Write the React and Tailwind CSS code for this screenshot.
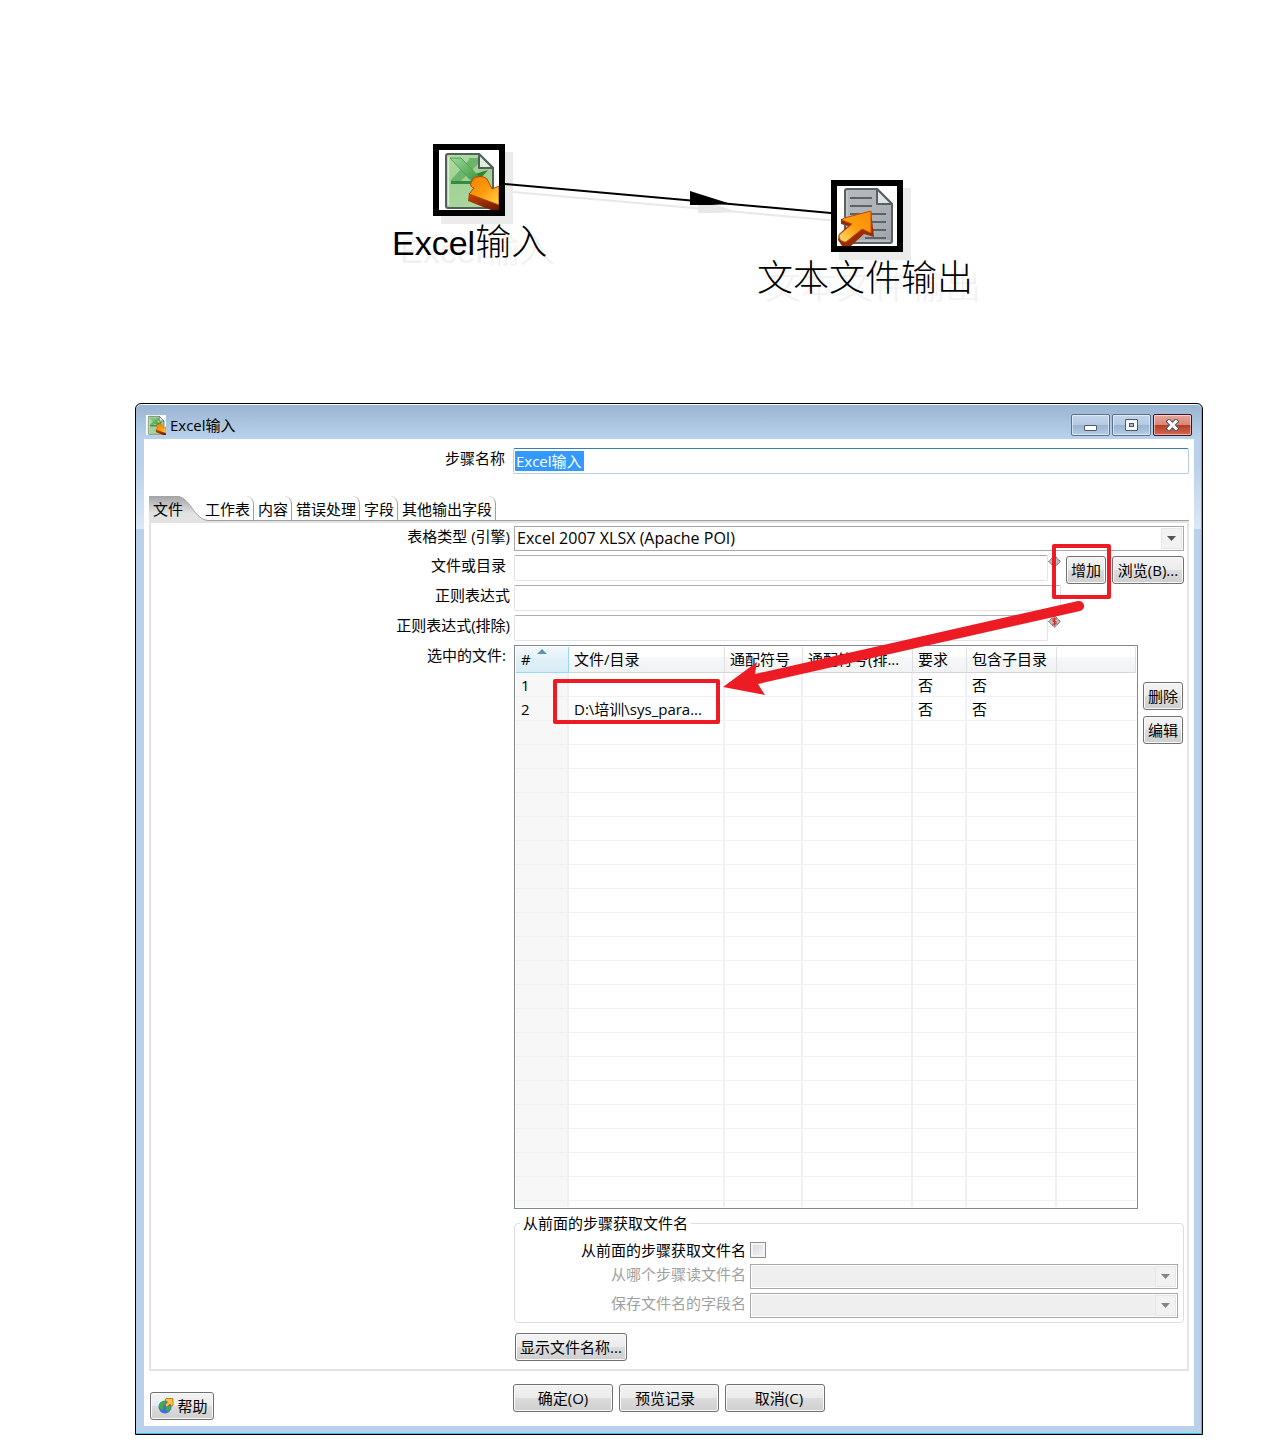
import React from "react";

const columns = ["#", "文件/目录", "通配符号", "通配符号(排...", "要求", "包含子目录", ""];

const files = [
  ["1", "", "", "", "否", "否", ""],
  ["2", "D:\\培训\\sys_para...", "", "", "否", "否", ""],
];

const rows = [...files, ...Array.from({ length: 20 }, () => ["", "", "", "", "", "", ""])];

function ExcelInputIcon({ className }) {
  return (
    <svg viewBox="0 0 60 60" className={className} aria-hidden="true">
      <defs>
        <linearGradient id="sheet" x1="0" y1="0" x2="0.3" y2="1">
          <stop offset="0" stopColor="#b5dca9" />
          <stop offset="0.5" stopColor="#9fd092" />
          <stop offset="1" stopColor="#aad69f" />
        </linearGradient>
        <linearGradient id="xbar" x1="0" y1="0" x2="1" y2="1">
          <stop offset="0" stopColor="#a3d99f" />
          <stop offset="0.5" stopColor="#5bb05d" />
          <stop offset="1" stopColor="#2c7a33" />
        </linearGradient>
        <linearGradient id="arrowIn" x1="0" y1="0" x2="1" y2="1">
          <stop offset="0" stopColor="#f57f00" />
          <stop offset="0.5" stopColor="#fd9a0c" />
          <stop offset="1" stopColor="#ffd84a" />
        </linearGradient>
        <linearGradient id="arrowInSide" x1="0" y1="0" x2="1" y2="1">
          <stop offset="0" stopColor="#c24a08" />
          <stop offset="1" stopColor="#6d1502" />
        </linearGradient>
      </defs>
      <path d="M9 4h31l14 14v38a2 2 0 0 1-2 2H9a2 2 0 0 1-2-2V6a2 2 0 0 1 2-2z" fill="url(#sheet)" stroke="#53605a" strokeWidth="2" />
      <path d="M9.500 7v48.500" stroke="#d4efcc" strokeWidth="1.500" />
      <path d="M30 8h9v6L22 31h16v3H12v-4L30 10z" fill="#6bb56b" />
      <path d="M12 31h26v3H12z" fill="#378a3d" />
      <path d="M36 24l13-4-7 8 6 6-8 0z" fill="#2f8438" />
      <path d="M11 8h11l25 26-9 3z" fill="url(#xbar)" stroke="#559e55" strokeWidth="1" />
      <path d="M40 4v14h14z" fill="#e1f0dc" stroke="#53605a" strokeWidth="2" strokeLinejoin="round" />
      <path d="M30 43l-1 8 23 9h8V46z" fill="url(#arrowInSide)" />
      <path d="M33 31c1-5 11-6 15-2l5 10 7-3v19l-30-11 5-6c-4-1-4-4-2-7z" fill="url(#arrowIn)" stroke="#b34206" strokeWidth="1" strokeLinejoin="round" />
    </svg>
  );
}

function TextOutputIcon({ className }) {
  return (
    <svg viewBox="0 0 60 60" className={className} aria-hidden="true">
      <defs>
        <linearGradient id="paper" x1="0" y1="0" x2="1" y2="1">
          <stop offset="0" stopColor="#b6babd" />
          <stop offset="0.5" stopColor="#aeb3b7" />
          <stop offset="1" stopColor="#9da3a8" />
        </linearGradient>
        <linearGradient id="arrowOut" x1="1" y1="0" x2="0" y2="1">
          <stop offset="0" stopColor="#f98a00" />
          <stop offset="0.55" stopColor="#fda012" />
          <stop offset="1" stopColor="#ffe27a" />
        </linearGradient>
      </defs>
      <path d="M10 3h30l15 15v37a2 2 0 0 1-2 2H10a2 2 0 0 1-2-2V5a2 2 0 0 1 2-2z" fill="url(#paper)" stroke="#5a6064" strokeWidth="2" />
      <path d="M10 5v50h43" fill="none" stroke="#cdd1d3" strokeWidth="1" />
      <path d="M13 12h22M13 20h22M13 28h36M30 36h19M30 44h19M28 52h21" stroke="#5d6266" strokeWidth="2" />
      <path d="M40 3v15h15z" fill="#e0e3e5" stroke="#5a6064" strokeWidth="2" strokeLinejoin="round" />
      <path d="M34 25l3 26-10-3-13 12H5l-4-6 1-6 9-8-7-2V33z" fill="#9a2c05" />
      <path d="M34 25v22l-9-4L9 56c-4 0-7-2-7-7l13-11-10-4 2-2z" fill="url(#arrowOut)" stroke="#c0500a" strokeWidth="1" strokeLinejoin="round" />
    </svg>
  );
}

function GlobeIcon() {
  return (
    <svg viewBox="0 0 16 16" className="h-4 w-4" aria-hidden="true">
      <circle cx="7" cy="9" r="6.500" fill="#3b6fe0" />
      <path d="M1 7c1-3 4-4.500 6.500-4L7 6 5 7l1 3-2 2-2.500-2z" fill="#3fae49" />
      <path d="M8 9l4-1 1 2-3 4-2-2z" fill="#3fae49" />
      <path d="M7 2l1-1.500h7v7l-2 .5-1-2-3 3-2-2 2.500-3z" fill="#fcc43c" stroke="#a86f10" strokeWidth="0.800" />
    </svg>
  );
}

function VariableIcon({ dollar }) {
  return (
    <svg viewBox="0 0 13 13" className="h-[13px] w-[13px] shrink-0" aria-hidden="true">
      <path d="M6.500 0.700L12.300 6.500 6.500 12.300 0.700 6.500z" fill="#bdbdbd" stroke="#4a4a4a" strokeWidth="1" strokeDasharray="1.500 0.500" />
      {dollar && <path d="M8.500 4H5v2.500h3V9H4.500M6.500 2.500v8" fill="none" stroke="#d81e1e" strokeWidth="1" />}
    </svg>
  );
}

function Button({ className = "", children, ...rest }) {
  return (
    <button
      type="button"
      className={
        "flex h-7 shrink-0 items-center justify-center whitespace-nowrap rounded-[3px] border border-[#707070] bg-[linear-gradient(#f3f3f3,#ebebeb_50%,#dcdcdc_50%,#cfcfcf)] shadow-[inset_0_0_0_1px_#fafafa] " +
        className
      }
      {...rest}
    >
      {children}
    </button>
  );
}

function TextField({ id, className = "" }) {
  return (
    <input
      id={id}
      type="text"
      className={
        "h-[26px] min-w-0 rounded-[2px] border border-[#e2e3ea] border-t-[#abadb3] bg-white px-1 outline-none " +
        className
      }
    />
  );
}

function Combo({ id, options, disabled, className = "" }) {
  return (
    <div className={"relative h-[25px] min-w-0 border border-[#a7a7ac] bg-white p-px " + className}>
      <select
        id={id}
        disabled={disabled}
        className="block h-full w-full appearance-none bg-white pb-px pl-px pr-6 text-base leading-5 text-black opacity-100 outline-none disabled:bg-[#efefef]"
      >
        {options.map((o) => (
          <option key={o}>{o}</option>
        ))}
      </select>
      <span className="pointer-events-none absolute inset-y-px right-px flex w-[21px] items-center justify-center border border-[#e6e6e6] bg-[#f2f2f2]">
        <svg viewBox="0 0 9 5" className="h-[5px] w-[9px]" aria-hidden="true">
          <path d="M0 0h9L4.500 5z" fill={disabled ? "#858585" : "#555"} />
        </svg>
      </span>
    </div>
  );
}

function FormRow({ id, label, inset, children }) {
  return (
    <div className="flex h-[26px] items-start">
      <label htmlFor={id} className={"w-[363px] shrink-0 text-right leading-5 " + (inset ? "pr-2" : "pr-1")}>
        {label}
      </label>
      {children}
    </div>
  );
}

function Tab({ children }) {
  return (
    <button
      type="button"
      role="tab"
      aria-selected="false"
      className="flex h-6 items-center whitespace-nowrap rounded-tr-[8px] border-r border-[#a0a0a0] pl-1 pr-[3px] pt-[2px]"
    >
      {children}
    </button>
  );
}

function Flow() {
  return (
    <section className="relative h-[403px] font-['Liberation_Sans','Noto_Sans_CJK_SC',sans-serif] text-4xl font-light">
      <div className="absolute left-[433px] top-[144px] h-[72px] w-[72px] border-[6px] border-black bg-white shadow-[8px_8px_0_#ebebeb]">
        <ExcelInputIcon className="h-full w-full" />
      </div>
      <p className="absolute left-[392px] top-[222px] whitespace-nowrap leading-[42px] [text-shadow:8px_8px_0_#f1f1f1]">
        <span className="text-[34px] font-normal">Excel</span>输入
      </p>
      <div className="absolute left-[831px] top-[180px] h-[72px] w-[72px] border-[6px] border-black bg-white shadow-[8px_8px_0_#ebebeb]">
        <TextOutputIcon className="h-full w-full" />
      </div>
      <p className="absolute left-[757px] top-[258px] whitespace-nowrap leading-[42px] [text-shadow:8px_8px_0_#f1f1f1]">
        文本文件输出
      </p>
      <svg className="absolute left-[505px] top-[170px] h-[60px] w-[326px]" viewBox="505 170 326 60" aria-hidden="true">
        <g fill="#e8e8e8" stroke="#e8e8e8">
          <path d="M513 192L839 221" strokeWidth="2" />
          <path d="M698 199v14h20l20-1z" stroke="none" />
        </g>
        <path d="M505 184L831 213" stroke="#000" strokeWidth="2" />
        <path d="M690 191v14h21l20-1z" fill="#000" />
      </svg>
    </section>
  );
}

function TitleBar() {
  const box =
    "flex h-[22px] w-[39px] items-center justify-center rounded-[2px] border shadow-[inset_0_0_0_1px_rgba(255,255,255,0.5)] ";
  return (
    <header className="flex h-[34px] items-center px-[10px] pt-2">
      <ExcelInputIcon className="h-5 w-5 bg-white" />
      <h1 className="flex-1 pl-1">Excel输入</h1>
      <div className="flex items-center gap-[2px] self-start pt-[2px]">
        <button type="button" aria-label="最小化" className={box + "border-[#5f6f8e] bg-[linear-gradient(#c3d5e9,#b4cbe3_50%,#98b3d0_50%,#b3cce6)]"}>
          <svg viewBox="0 0 13 13" className="h-[13px] w-[13px]" aria-hidden="true">
            <rect x="0.500" y="6.500" width="12" height="5" rx="0.500" fill="#fff" stroke="#535666" />
          </svg>
        </button>
        <button type="button" aria-label="最大化" className={box + "border-[#5f6f8e] bg-[linear-gradient(#c3d5e9,#b4cbe3_50%,#98b3d0_50%,#b3cce6)]"}>
          <svg viewBox="0 0 13 13" className="h-[13px] w-[13px]" aria-hidden="true">
            <rect x="0.500" y="0.500" width="12" height="11" rx="0.500" fill="#f7f7f7" stroke="#535666" />
            <rect x="4.500" y="4.500" width="4" height="3" fill="#9db8d8" stroke="#535666" />
          </svg>
        </button>
        <button type="button" aria-label="关闭" className={box + "border-[#43141b] bg-[linear-gradient(#e6a69a,#d98577_50%,#b93a22_50%,#cf6a52)]"}>
          <svg viewBox="0 0 13 12" className="h-3 w-[13px]" aria-hidden="true">
            <path d="M3 2.500L10 9.500M10 2.500L3 9.500" stroke="#535666" strokeWidth="5" strokeLinecap="square" />
            <path d="M3 2.500L10 9.500M10 2.500L3 9.500" stroke="#fff" strokeWidth="3" strokeLinecap="square" />
          </svg>
        </button>
      </div>
    </header>
  );
}

function FileTable() {
  return (
    <div className="min-w-0 flex-1 border border-[#828790] p-px">
      <table aria-labelledby="selected-files" className="w-full table-fixed border-separate border-spacing-0">
        <colgroup>
          <col className="w-[53px]" />
          <col className="w-[156px]" />
          <col className="w-[78px]" />
          <col className="w-[110px]" />
          <col className="w-[54px]" />
          <col className="w-[90px]" />
          <col />
        </colgroup>
        <thead>
          <tr className="h-[26px]">
            {columns.map((c, i) => (
              <th
                key={i}
                className={
                  "relative whitespace-nowrap border-b border-r p-0 pb-px pl-[5px] text-left font-normal leading-[22px] " +
                  (i === 0
                    ? "border-[#96d9f9] bg-[linear-gradient(#f2f9fc,#e1f1f9_50%,#d8ecf6)]"
                    : "border-b-[#d5d5d5] border-r-[#dedfe1] bg-[linear-gradient(#fff_40%,#f7f8fa_40%,#f1f2f4)]")
                }
              >
                {c}
                {i === 0 && (
                  <svg viewBox="0 0 10 5" className="absolute left-[21px] top-[2px] h-[5px] w-[10px]" aria-hidden="true">
                    <path d="M0 5L5 0l5 5z" fill="#5d93ad" />
                  </svg>
                )}
              </th>
            ))}
          </tr>
        </thead>
        <tbody>
          {rows.map((r, y) => (
            <tr key={y} className="h-6">
              {r.map((c, x) => (
                <td
                  key={x}
                  className={
                    "h-6 whitespace-nowrap border-b border-b-[#f0f0f0] p-0 pl-[5px] leading-[22px] " +
                    (x === 6 ? "" : "border-r-2 border-r-[#edf0f6] ") +
                    (x === 0 ? "bg-[#f7f7f7]" : "")
                  }
                >
                  {c}
                </td>
              ))}
            </tr>
          ))}
          <tr>
            {columns.map((c, x) => (
              <td
                key={x}
                className={
                  "h-[6px] p-0 " + (x === 6 ? "" : "border-r-2 border-r-[#edf0f6] ") + (x === 0 ? "bg-[#f7f7f7]" : "")
                }
              />
            ))}
          </tr>
        </tbody>
      </table>
    </div>
  );
}

function Annotations() {
  return (
    <svg
      className="pointer-events-none absolute right-[67px] top-[7px] h-[210px] w-[580px]"
      viewBox="540 530 580 210"
      aria-hidden="true"
    >
      <g fill="none" stroke="#ed1c24" strokeWidth="4" strokeLinejoin="round">
        <rect x="1054" y="546" width="55" height="51" />
        <rect x="555" y="681" width="163" height="41" />
      </g>
      <path d="M723 687L757 662 755 674 1078 601A5 5 0 0 1 1080 611L758 684 765 695z" fill="#ed1c24" />
    </svg>
  );
}

function Panel() {
  return (
    <div className="border-t border-[#a0a0a0]">
      <div role="tabpanel" className="relative border-2 border-[#e3e3e3] pb-2 pr-[3px] pt-[3px]">
        <div className="flex flex-col gap-1">
          <div className="-mb-px">
            <FormRow id="engine" label="表格类型 (引擎)">
              <Combo id="engine" options={["Excel 2007 XLSX (Apache POI)"]} className="flex-1" />
            </FormRow>
          </div>
          <FormRow id="path" label="文件或目录" inset>
            <TextField id="path" className="flex-1" />
            <VariableIcon />
            <Button className="ml-[5px] mt-px w-10">增加</Button>
            <Button className="ml-[6px] mt-px w-[72px]">浏览(B)...</Button>
          </FormRow>
          <FormRow id="regex" label="正则表达式">
            <TextField id="regex" className="mr-[123px] flex-1" />
          </FormRow>
          <FormRow id="exclude" label="正则表达式(排除)">
            <TextField id="exclude" className="flex-1" />
            <div className="mr-[123px]">
              <VariableIcon dollar />
            </div>
          </FormRow>
          <div className="flex items-start">
            <span id="selected-files" className="w-[363px] shrink-0 pr-2 text-right leading-5">
              选中的文件:
            </span>
            <FileTable />
            <div className="ml-[5px] mr-px mt-[37px] flex flex-col gap-[6px]">
              <Button className="w-10">删除</Button>
              <Button className="w-10">编辑</Button>
            </div>
          </div>
        </div>

        <fieldset className="ml-[363px] mt-[6px] min-w-0 rounded-[4px] border border-[#d5dfe5] pb-1 pr-[5px]">
          <legend className="ml-[5px] px-[3px] leading-4">从前面的步骤获取文件名</legend>
          <div className="flex h-[33px] items-center pt-1">
            <label htmlFor="from-prev" className="w-[235px] shrink-0 pr-1 text-right">
              从前面的步骤获取文件名
            </label>
            <input
              id="from-prev"
              type="checkbox"
              className="h-4 w-4 appearance-none border border-[#8e8f8f] bg-[linear-gradient(135deg,#d3d8de,#f6f6f6)] shadow-[inset_0_0_0_2px_#f4f4f4]"
            />
          </div>
          <div className="flex h-[29px] items-start text-[#a0a0a0]">
            <label htmlFor="step" className="w-[235px] shrink-0 pr-1 text-right leading-5">
              从哪个步骤读文件名
            </label>
            <Combo id="step" options={[""]} disabled className="flex-1" />
          </div>
          <div className="flex h-[25px] items-start text-[#a0a0a0]">
            <label htmlFor="field" className="w-[235px] shrink-0 pr-1 text-right leading-5">
              保存文件名的字段名
            </label>
            <Combo id="field" options={[""]} disabled className="flex-1" />
          </div>
        </fieldset>

        <Button className="ml-[364px] mt-[10px] w-28">显示文件名称...</Button>
        <Annotations />
      </div>
    </div>
  );
}

export default function App() {
  return (
    <main className="bg-white pb-2 text-black">
      <Flow />
      <section
        aria-label="Excel输入"
        className="ml-[135px] mr-[82px] rounded-t-[6px] border border-black bg-[#b9d1ea] bg-[linear-gradient(#99b4d1,#b9d1ea_34px,#b9d1ea_60px,#dce8f5_125px,#b9d1ea_125px)] font-['Open_Sans','Noto_Sans_CJK_SC',sans-serif] text-[15px] leading-5 shadow-[inset_0_1px_0_#fff,inset_-1px_-1px_0_#35c3dd]"
      >
        <TitleBar />
        <div className="mx-2 mb-2 mt-px bg-white px-[5px] pb-[6px] pt-[9px]">
          <div className="flex items-start">
            <label htmlFor="step-name" className="w-[364px] shrink-0 pr-2 text-right leading-5">
              步骤名称
            </label>
            <div className="flex h-[26px] min-w-0 flex-1 items-center rounded-[2px] border border-[#b5cfe7] border-t-[#3d7bad] px-px">
              <input
                id="step-name"
                type="text"
                defaultValue="Excel输入"
                className="h-5 w-[69px] bg-[#3399ff] pl-px text-white outline-none"
              />
            </div>
          </div>

          <div role="tablist" className="mt-[22px] flex">
            <button type="button" role="tab" aria-selected="true" className="relative h-6 w-[52px] pl-1 pt-[2px] text-left">
              <svg viewBox="0 0 60 25" className="absolute left-0 top-0 h-[25px] w-[60px]" aria-hidden="true">
                <defs>
                  <linearGradient id="tab" x1="0" y1="0" x2="0" y2="1">
                    <stop offset="0" stopColor="#a3a3a3" />
                    <stop offset="0.7" stopColor="#e3e3e3" />
                  </linearGradient>
                </defs>
                <path d="M0 0H26C42 0 44 24 60 24.500V25H0z" fill="url(#tab)" />
                <path d="M26 0C42 0 44 24 60 24.500" fill="none" stroke="#a0a0a0" />
              </svg>
              <span className="relative">文件</span>
            </button>
            <Tab>工作表</Tab>
            <Tab>内容</Tab>
            <Tab>错误处理</Tab>
            <Tab>字段</Tab>
            <Tab>其他输出字段</Tab>
          </div>

          <Panel />

          <div className="mt-[13px] grid grid-cols-[1fr_auto_1fr] items-start">
            <Button className="ml-px mt-2 w-16 gap-[3px] pl-[2px]">
              <GlobeIcon />
              帮助
            </Button>
            <div className="flex gap-[6px]">
              <Button className="w-[100px]">确定(O)</Button>
              <Button className="w-[100px] pr-2">预览记录</Button>
              <Button className="w-[100px] pl-2">取消(C)</Button>
            </div>
          </div>
        </div>
      </section>
    </main>
  );
}
